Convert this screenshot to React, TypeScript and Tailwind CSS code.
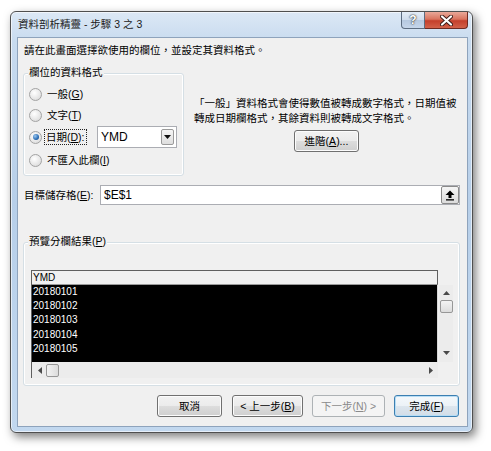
import React from 'react';

const U = ({ children }: { children: React.ReactNode }) => (
  <span className="underline underline-offset-[1px]">{children}</span>
);

const Radio = ({ checked }: { checked?: boolean }) => (
  <span className="w-[13px] h-[13px] rounded-full border border-[#a3a3a3] bg-[radial-gradient(circle_at_40%_35%,#ffffff_0%,#e6e6e6_60%,#d2d2d2_100%)] flex items-center justify-center shrink-0">
    {checked && (
      <span className="w-[6px] h-[6px] rounded-full bg-[radial-gradient(circle_at_35%_35%,#9cc8f0_0%,#2a6db5_60%,#123f73_100%)]" />
    )}
  </span>
);

type BtnKind = 'normal' | 'default' | 'disabled';

const Btn = ({ kind = 'normal', className = '', children }: { kind?: BtnKind; className?: string; children: React.ReactNode }) => {
  const look =
    kind === 'disabled'
      ? 'border-[#adb2b5] bg-[#f4f4f4] text-[#8a8a8a]'
      : kind === 'default'
      ? 'border-[#3c7fb1] bg-[linear-gradient(180deg,#f4f8fb_0%,#ecf2f7_50%,#dde6ee_50%,#d2dde7_100%)] shadow-[inset_0_0_0_1px_#b7ddf5]'
      : 'border-[#707070] bg-[linear-gradient(180deg,#f2f2f2_0%,#ebebeb_50%,#dddddd_50%,#cfcfcf_100%)] shadow-[inset_0_0_0_1px_#fcfcfc]';
  return (
    <div className={`h-[22px] rounded-[3px] border flex items-center justify-center leading-[15px] whitespace-nowrap shrink-0 ${look} ${className}`}>
      {children}
    </div>
  );
};

const Tri = ({ dir }: { dir: 'up' | 'down' | 'left' | 'right' }) => {
  const pts = {
    up: '0,4 3.5,0 7,4',
    down: '0,0 7,0 3.5,4',
    left: '4,0 4,7 0,3.5',
    right: '0,0 0,7 4,3.5',
  }[dir];
  const vertical = dir === 'up' || dir === 'down';
  return (
    <svg width={vertical ? 7 : 4} height={vertical ? 4 : 7} viewBox={vertical ? '0 0 7 4' : '0 0 4 7'}>
      <polygon points={pts} fill="#4a4a4a" />
    </svg>
  );
};

const rows = ['20180101', '20180102', '20180103', '20180104', '20180105'];

export default function App() {
  return (
    <div className="w-[491px] h-[451px] bg-white pl-[10px] pt-[11px] font-['Liberation_Sans','Noto_Sans_CJK_TC',sans-serif] text-[10.5px] text-black">
      {/* Window frame */}
      <div className="w-[463px] h-[422px] flex flex-col border border-[#4f4f4f] rounded-[6px] bg-[linear-gradient(180deg,#dce8f5_0%,#c8dbef_7%,#b7cfe9_45%,#c2d8ef_100%)] shadow-[3px_4px_10px_rgba(0,0,0,0.5),inset_0_0_0_1px_rgba(255,255,255,0.6)]">
        {/* Title bar */}
        <div className="h-[25px] flex shrink-0">
          <div className="flex-1 pl-[7px] flex items-center leading-[15px] text-[#1b1b1b]">
            資料剖析精靈 - 步驟 3 之 3
          </div>
          <div className="flex mr-[4px] h-[17px]">
            <div className="w-[24px] h-[17px] rounded-bl-[4px] border border-[#5c6c80] border-t-0 bg-[linear-gradient(180deg,#e4edf7_0%,#cfdcec_50%,#b5c8df_50%,#c6d6ea_100%)] flex items-center justify-center text-[12px] font-bold leading-none text-white [text-shadow:0_0_2px_#2a2a2a,0_0_1px_#2a2a2a]">
              ?
            </div>
            <div className="w-[43px] h-[17px] rounded-br-[4px] border border-[#6e2a22] border-t-0 border-l-0 bg-[linear-gradient(180deg,#e9a899_0%,#d9745f_45%,#c4402c_55%,#d2614a_100%)] flex items-center justify-center">
              <svg width="13" height="11" viewBox="0 0 13 11">
                <path d="M2 1.5 L11 9.5 M11 1.5 L2 9.5" stroke="#3a1a16" strokeWidth="4" strokeLinecap="round" />
                <path d="M2 1.5 L11 9.5 M11 1.5 L2 9.5" stroke="#ffffff" strokeWidth="2.2" strokeLinecap="round" />
              </svg>
            </div>
          </div>
        </div>

        {/* Client area */}
        <div className="flex-1 pl-[6px] pr-[4px] pb-[5px] flex">
          <div className="flex-1 border border-[#8ea3bc] bg-[#f0f0f0] flex flex-col leading-[15px]">
            {/* instruction */}
            <div className="pl-[6px] pt-[5px] h-[20px]">請在此畫面選擇欲使用的欄位，並設定其資料格式。</div>

            {/* format group + description */}
            <div className="mt-[15px] h-[103px] flex">
              <div className="relative ml-[5px] w-[161px] h-[103px] rounded-[3px] border border-[#d5dfe5] shadow-[inset_0_0_0_1px_#ffffff] flex flex-col pl-[5px] pr-[6px]">
                <span className="absolute left-[4px] top-[-9px] px-[1px] bg-[#f0f0f0]">欄位的資料格式</span>
                <div className="mt-[12px] h-[16px] flex items-center gap-[5px]">
                  <Radio />
                  <span>一般(<U>G</U>)</span>
                </div>
                <div className="mt-[5px] h-[16px] flex items-center gap-[5px]">
                  <Radio />
                  <span>文字(<U>T</U>)</span>
                </div>
                <div className="mt-[3px] h-[22px] flex items-center">
                  <Radio checked />
                  <span className="ml-[2px] whitespace-nowrap border border-dotted border-[#222] px-[1px] leading-[14px]">
                    日期(<U>D</U>):
                  </span>
                  <div className="ml-auto w-[80px] h-[22px] border border-[#abadb3] bg-white flex items-center">
                    <span className="flex-1 pl-[3px] text-[12px]">YMD</span>
                    <div className="w-[13px] h-[16px] mr-[2px] rounded-[2px] border border-[#9a9a9a] bg-[linear-gradient(180deg,#f6f6f6,#dedede)] flex items-center justify-center">
                      <svg width="7" height="4" viewBox="0 0 7 4">
                        <polygon points="0,0 7,0 3.5,4" fill="#111" />
                      </svg>
                    </div>
                  </div>
                </div>
                <div className="mt-[4px] h-[16px] flex items-center gap-[5px]">
                  <Radio />
                  <span>不匯入此欄(<U>I</U>)</span>
                </div>
              </div>

              <div className="flex-1 flex flex-col pl-[10px] pt-[23px]">
                <div className="whitespace-nowrap">
                  「一般」資料格式會使得數值被轉成數字格式，日期值被
                  <br />
                  轉成日期欄格式，其餘資料則被轉成文字格式。
                </div>
                <Btn className="mt-[4px] w-[65px] self-center mr-[8px]">
                  進階(<U>A</U>)...
                </Btn>
              </div>
            </div>

            {/* destination */}
            <div className="mt-[9px] h-[20px] flex items-center">
              <span className="pl-[6px] w-[82px] shrink-0 whitespace-nowrap">目標儲存格(<U>E</U>):</span>
              <div className="flex-1 mr-[7px] h-[20px] border border-[#abadb3] bg-white flex items-center">
                <span className="flex-1 pl-[3px] text-[12px]">$E$1</span>
                <div className="w-[18px] h-[18px] rounded-[2px] border border-[#8a8a8a] bg-[linear-gradient(180deg,#f5f5f5,#dcdcdc)] flex items-center justify-center">
                  <svg width="10" height="11" viewBox="0 0 10 11">
                    <path d="M5 0.5 L9.5 5 H6.5 V8 H3.5 V5 H0.5 Z" fill="#000" />
                    <rect x="1" y="9.2" width="8" height="1.3" fill="#000" />
                  </svg>
                </div>
              </div>
            </div>

            {/* preview group */}
            <div className="relative mt-[37px] ml-[5px] w-[437px] h-[144px] rounded-[3px] border border-[#d5dfe5] shadow-[inset_0_0_0_1px_#ffffff] flex pl-[7px] pt-[27px]">
              <span className="absolute left-[4px] top-[-9px] px-[1px] bg-[#f0f0f0]">預覽分欄結果(<U>P</U>)</span>
              <div className="w-[407px] h-[108px] border-l border-t border-[#5f5f5f] flex flex-col">
                <div className="h-[14px] border-b border-r border-b-[#9a9a9a] border-r-[#5f5f5f] bg-[#f0f0f0] pl-[1px] font-['Liberation_Sans',sans-serif] text-[10px] leading-[14px]">
                  YMD
                </div>
                <div className="h-[77px] bg-black text-white pl-[1px] font-['Liberation_Sans',sans-serif] text-[10px] leading-[14.2px] border-r border-[#d8d8d8]">
                  {rows.map((r) => (
                    <div key={r}>{r}</div>
                  ))}
                </div>
                <div className="h-[16px] bg-[#ececec] flex items-center pl-[6px] pr-[5px]">
                  <Tri dir="left" />
                  <div className="ml-[4px] w-[13px] h-[13px] rounded-[2px] border border-[#979797] bg-[linear-gradient(90deg,#f3f3f3,#dcdcdc)]" />
                  <div className="flex-1" />
                  <Tri dir="right" />
                </div>
              </div>
              <div className="ml-[1px] mt-[15px] w-[14px] h-[77px] bg-[#ececec] flex flex-col items-center pt-[6px]">
                <Tri dir="up" />
                <div className="mt-[5px] w-[13px] h-[13px] rounded-[2px] border border-[#979797] bg-[linear-gradient(180deg,#f3f3f3,#dcdcdc)]" />
                <div className="flex-1" />
                <div className="mb-[7px]">
                  <Tri dir="down" />
                </div>
              </div>
            </div>

            {/* buttons */}
            <div className="mt-[9px] flex justify-end pr-[8px]">
              <Btn className="w-[65px]">取消</Btn>
              <Btn className="ml-[10px] w-[71px]">
                &lt; 上一步(<U>B</U>)
              </Btn>
              <Btn kind="disabled" className="ml-[9px] w-[73px]">
                下一步(<U>N</U>) &gt;
              </Btn>
              <Btn kind="default" className="ml-[9px] w-[65px]">
                完成(<U>F</U>)
              </Btn>
            </div>
          </div>
        </div>
      </div>
    </div>
  );
}
